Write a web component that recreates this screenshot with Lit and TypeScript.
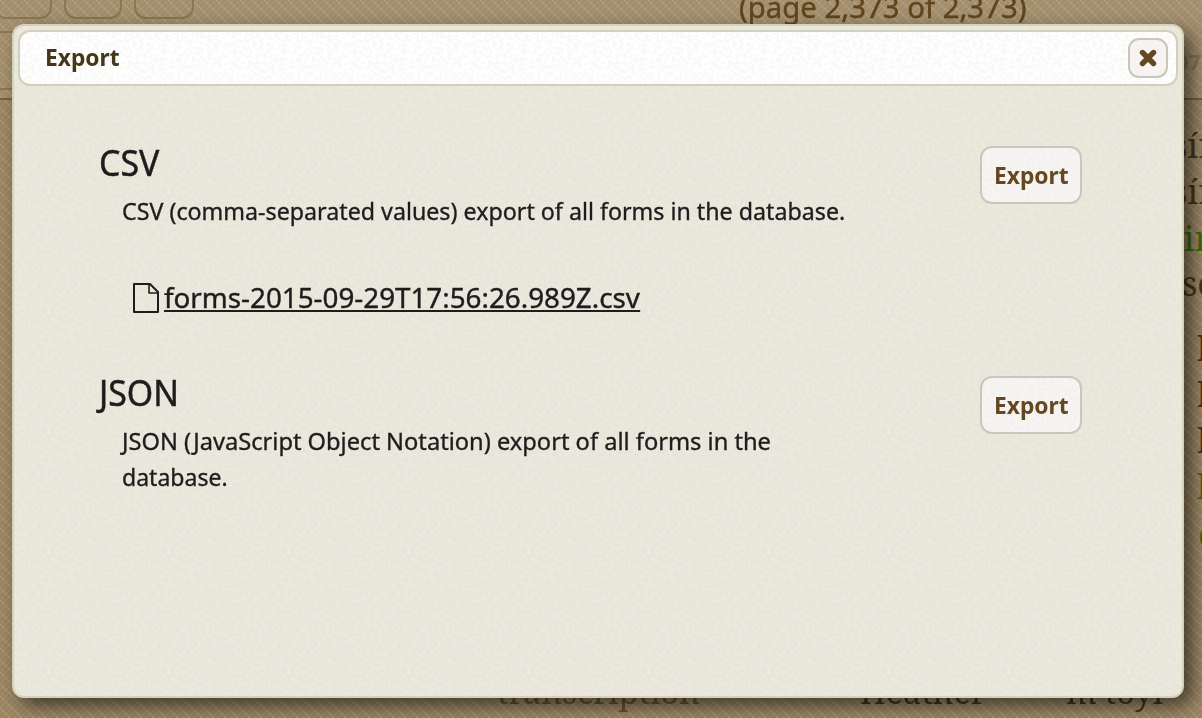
import { LitElement, html, css, unsafeCSS } from "lit";
import { customElement, property } from "lit/decorators.js";

const grain = (opacity: number) =>
  unsafeCSS(
    `url("data:image/svg+xml,${encodeURIComponent(
      `<svg xmlns="http://www.w3.org/2000/svg" width="120" height="120"><filter id="n" x="0" y="0" width="100%" height="100%"><feTurbulence type="fractalNoise" baseFrequency="0.27" numOctaves="2" seed="4" stitchTiles="stitch"/><feColorMatrix values="0 0 0 0 0.37  0 0 0 0 0.34  0 0 0 0 0.28  0 5 0 0 -2.1"/></filter><rect width="120" height="120" filter="url(#n)" opacity="${opacity}"/></svg>`
    )}")`
  );

const weave = unsafeCSS(
  `url("data:image/svg+xml,${encodeURIComponent(
    `<svg xmlns="http://www.w3.org/2000/svg" width="24" height="24"><g fill="none" stroke="#fff" stroke-opacity=".11" stroke-width="1"><path d="M0 6L6 0M0 12L12 0M0 18L18 0M0 24L24 0M6 24L24 6M12 24L24 12M18 24L24 18"/><path stroke-opacity=".13" stroke-width="1.2" d="M0 0L24 24M12 0L24 12M0 12L12 24"/></g></svg>`
  )}")`
);

@customElement("export-option")
export class ExportOption extends LitElement {
  static styles = css`
    :host { display: flex; height: 230px; justify-content: space-between; box-sizing: border-box; }
    .title { margin: 0 0 0 1px; font-weight: 400; font-size: 36px; line-height: 44px; white-space: nowrap; height: 52px; -webkit-text-stroke: .5px #1d1d1d; }
    .title span, .desc span, .label { display: inline-block; transform-origin: 0 50%; white-space: nowrap; }
    .desc { margin: 0 0 0 24px; font-size: 24px; line-height: 36px; -webkit-text-stroke: .35px #1d1d1d; }
    .desc span { display: block; width: max-content; }
    .go {
      margin-top: 5px; box-sizing: border-box; width: 102px; height: 58px; padding: 0;
      border: 2px solid #cbc6bb; border-radius: 12px; color: #65481f;
      background: ${grain(0.04)} #f7f5f4;
      font: 700 24px/36px "Noto Sans", sans-serif; flex: none;
      display: flex; align-items: center; justify-content: center;
    }
    .label { transform: scaleX(.95); transform-origin: 50% 50%; }
  `;
  @property() heading = "";
  @property({ attribute: false }) lines: { text: string; scale: number }[] = [];
  @property({ type: Number }) headingScale = 1;
  render() {
    return html`
      <div class="info">
        <h2 class="title"><span style="transform:scaleX(${this.headingScale})">${this.heading}</span></h2>
        <p class="desc">${this.lines.map((l) => html`<span style="transform:scaleX(${l.scale})">${l.text} </span>`)}</p>
        <slot></slot>
      </div>
      <button class="go"><span class="label">Export</span></button>`;
  }
}

@customElement("app-root")
export class AppRoot extends LitElement {
  static styles = css`
    :host {
      display: block; position: relative; width: 1202px; height: 718px; overflow: hidden;
      font-family: "Noto Sans", sans-serif; color: #1d1d1d; background: ${weave} #9b8662;
    }
    .page { height: 718px; overflow: hidden; display: grid; grid-template-rows: 100px 1fr; }
    .bar { position: relative; box-sizing: border-box; border-bottom: 2px solid #786343; background: ${weave} #a28e6c; }
    .tool { position: absolute; box-sizing: border-box; top: -40px; height: 59px; width: 58px; border: 2px solid #8d7650; border-radius: 12px; }
    .tool.wide { width: 60px; }
    .count { position: absolute; left: 739px; top: -12px; font-size: 29px; line-height: 38px; color: #60451c; transform: scaleX(1.012); transform-origin: 0 0; white-space: nowrap; -webkit-text-stroke: .4px #60451c; }
    .num { position: absolute; left: 1176px; top: 47px; font: 700 22px/28px "Noto Sans", sans-serif; color: #907753; }
    .word { position: absolute; font-family: "Noto Serif", "Liberation Serif", serif; font-size: 34px; line-height: 40px; color: #4a351a; white-space: nowrap; }
    .small { transform: scaleX(.955); transform-origin: 0 0; }
    .link { color: #3f6d10; }
    .dim { color: #6b5230; }
    .dialog {
      position: absolute; left: 12px; top: 24px; width: 1172px; height: 674px; box-sizing: border-box;
      border: 2px solid #d5d2bb; border-radius: 12px; padding: 4px;
      background: ${grain(0.055)} #ebe9dd; box-shadow: 8px 8px 20px rgba(0,0,0,.6);
    }
    .head {
      height: 56px; box-sizing: border-box; border: 2px solid #d3d0b9; border-radius: 12px;
      padding: 0 8px 0 25px; display: flex; align-items: center; justify-content: space-between;
      background: ${grain(0.07)} #fff; color: #463719; font-weight: 700; font-size: 24px;
    }
    .name { transform: scaleX(.95); transform-origin: 0 50%; line-height: 36px; margin-top: -3px; }
    .close {
      width: 40px; height: 40px; padding: 0; box-sizing: border-box; border: 2px solid #cbc6bb; border-radius: 11px;
      background: #f6f3f2; display: flex; align-items: center; justify-content: center;
    }
    .body { padding: 55px 96px 0 80px; }
    .file { display: flex; align-items: center; margin: 47px 0 0 35px; height: 40px; gap: 5px; }
    .icon { flex: none; margin-top: 3px; }
    .file a {
      display: block; color: #1d1d1d; font-size: 28px; line-height: 32px; height: 29px; text-decoration: none;
      border-bottom: 2px solid #1d1d1d; transform-origin: 0 50%; transform: scaleX(.992); white-space: nowrap;
      -webkit-text-stroke: .4px #1d1d1d;
    }
  `;
  render() {
    const word = (x: number, y: number, t: string, c = "") =>
      html`<span class="word ${c}" style="left:${x}px;top:${y}px">${t}</span>`;
    return html`
      <div class="page">
        <div class="bar">
          ${[-6, 64].map((x) => html`<i class="tool" style="left:${x}px"></i>`)}
          <i class="tool wide" style="left:134px"></i>
          <i class="tool" style="left:-20px;top:31px"></i>
          <span class="count">(page 2,373 of 2,373)</span>
          <span class="num">07</span>
        </div>
        <div>
          ${word(1172, 125, "sír")} ${word(1172, 171, "sír")} ${word(1175, 218, "·in", "link")}
          ${word(1182, 263, "se")} ${word(1197, 328, "k")} ${word(1197, 374, "k")} ${word(1197, 420, "k")}
          ${word(1197, 466, "k", "link")} ${word(1198, 514, "e", "link")}
          ${word(497, 671, "transcription", "dim small")} ${word(860, 671, "Heather", "small")} ${word(1066, 671, "m·toyi", "small")}
        </div>
      </div>
      <section class="dialog">
        <header class="head">
          <span class="name">Export</span>
          <button class="close" aria-label="Close">
            <svg width="18" height="18" viewBox="0 0 18 18"><path d="M3.5 3.5L14.5 14.5M14.5 3.5L3.5 14.5" stroke="#65481f" stroke-width="5.4" stroke-linecap="round"/></svg>
          </button>
        </header>
        <div class="body">
          <export-option heading="CSV" .headingScale=${0.94}
            .lines=${[{ text: "CSV (comma-separated values) export of all forms in the database.", scale: 0.968 }]}>
            <div class="file">
              <svg class="icon" width="26" height="30" viewBox="0 0 26 30" fill="none" stroke="#1d1d1d" stroke-width="2" stroke-linejoin="round"><path d="M1 1H17L25 9V29H1Z"/><path d="M16 1V10H25" stroke-width="1.6"/></svg>
              <a>forms-2015-09-29T17:56:26.989Z.csv</a>
            </div>
          </export-option>
          <export-option heading="JSON" .headingScale=${0.94}
            .lines=${[
              { text: "JSON (JavaScript Object Notation) export of all forms in the", scale: 0.985 },
              { text: "database.", scale: 0.96 },
            ]}></export-option>
        </div>
      </section>`;
  }
}
